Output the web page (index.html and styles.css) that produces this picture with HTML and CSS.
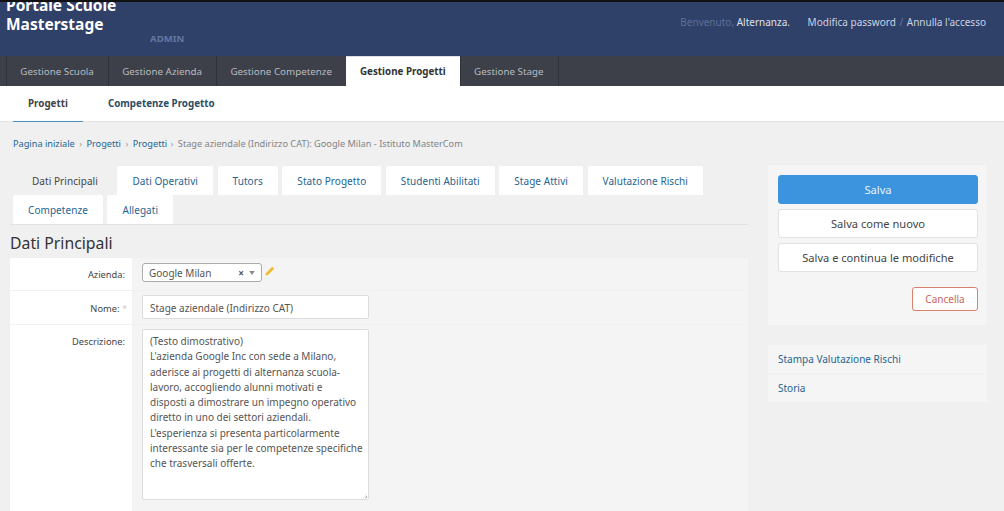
FILE: index.html
```html
<!DOCTYPE html>
<html lang="it">
<head>
  <meta charset="UTF-8">
  <meta name="viewport" content="width=device-width, initial-scale=1.0">
  <title>Portale Scuole Masterstage</title>
  <link rel="stylesheet" href="styles.css">
</head>
<body>
  <header class="top-bar">
    <div class="brand">
      <div class="brand-name">Portale Scuole<br>Masterstage</div>
      <div class="brand-role">ADMIN</div>
    </div>
    <div class="user-tools">
      <span class="welcome">Benvenuto,</span> <span class="user">Alternanza.</span>
      <a class="tool-first" href="#">Modifica password</a> <span class="slash">/</span> <a href="#">Annulla l'accesso</a>
    </div>
  </header>
  <nav class="main-nav">
    <a href="#">Gestione Scuola</a>
    <a href="#">Gestione Azienda</a>
    <a href="#">Gestione Competenze</a>
    <a class="active" href="#">Gestione Progetti</a>
    <a href="#">Gestione Stage</a>
  </nav>
  <nav class="sub-nav">
    <a class="active" href="#">Progetti</a>
    <a href="#">Competenze Progetto</a>
  </nav>
  <div class="breadcrumbs">
    <a href="#">Pagina iniziale</a> <i>›</i> <a href="#">Progetti</a> <i>›</i> <a href="#">Progetti</a> <i class="last">›</i> Stage aziendale (Indirizzo CAT): Google Milan - Istituto MasterCom
  </div>
  <main class="content">
    <section class="form-col">
      <div class="tabs">
        <a class="tab active" href="#">Dati Principali</a>
        <a class="tab" href="#">Dati Operativi</a>
        <a class="tab" href="#">Tutors</a>
        <a class="tab" href="#">Stato Progetto</a>
        <a class="tab" href="#">Studenti Abilitati</a>
        <a class="tab" href="#">Stage Attivi</a>
        <a class="tab" href="#">Valutazione Rischi</a>
        <a class="tab" href="#">Competenze</a>
        <a class="tab" href="#">Allegati</a>
      </div>
      <h2>Dati Principali</h2>
      <div class="form-row row-azienda">
        <label>Azienda:</label>
        <div class="field">
          <div class="select">
            <span>Google Milan</span>
            <b class="clear">×</b>
            <svg class="caret" width="6" height="4" viewBox="0 0 7 5"><path d="M0 0h7L3.5 5z" fill="#888"/></svg>
          </div>
          <svg class="pencil" width="10" height="10" viewBox="0 0 10 10"><path d="M7.2.8l2 2L3 9 .6 9.6 1 7z" fill="#eebb33"/></svg>
        </div>
      </div>
      <div class="form-row row-nome">
        <label>Nome: <em>*</em></label>
        <div class="field"><div class="input">Stage aziendale (Indirizzo CAT)</div></div>
      </div>
      <div class="form-row row-descr">
        <label>Descrizione:</label>
        <div class="field">
          <div class="input textarea">(Testo dimostrativo)<br>L'azienda Google Inc con sede a Milano, aderisce ai progetti di alternanza scuola-lavoro, accogliendo alunni motivati e<br>disposti a dimostrare un impegno operativo diretto in uno dei settori aziendali.<br>L'esperienza si presenta particolarmente interessante sia per le competenze specifiche che trasversali offerte.</div>
        </div>
      </div>
    </section>
    <aside class="side-col">
      <div class="actions">
        <button class="btn primary">Salva</button>
        <button class="btn">Salva come nuovo</button>
        <button class="btn">Salva e continua le modifiche</button>
        <div class="delete-row"><button class="btn-delete">Cancella</button></div>
      </div>
      <ul class="side-links">
        <li><a href="#">Stampa Valutazione Rischi</a></li>
        <li><a href="#">Storia</a></li>
      </ul>
    </aside>
  </main>
</body>
</html>
```

FILE: styles.css
```css
/* Global */
html, body { height: 511px; overflow: hidden; }
body {
  margin: 0;
  background: #f0f0f0;
  border-top: 2px solid #111;
  font-family: "Noto Sans", "Open Sans", sans-serif;
  font-size: 10px;
  color: #444;
}
a { color: #1f6591; text-decoration: none; }

/* Header */
.top-bar {
  height: 54px;
  overflow: hidden;
  display: flex;
  justify-content: space-between;
  background: #2f4069;
  padding: 0 18px 0 6px;
}
.brand-name {
  margin-top: -6px;
  font-size: 15.5px;
  line-height: 19px;
  font-weight: 700;
  color: #fff;
}
.brand-role {
  margin: -2px 0 0 144px;
  font-size: 9.6px;
  font-weight: 700;
  color: #64779f;
}
.user-tools { padding-top: 13px; font-size: 10px; color: #dfe5ef; }
.user-tools a { color: #cbd3e2; }
.welcome { color: #5d7099; }
.user { color: #dde2ea; }
.tool-first { margin-left: 15px; }
.slash { color: #64779f; margin: 0 1px; }

/* Main nav */
.main-nav {
  height: 30px;
  display: flex;
  padding-left: 6px;
  background: #3d4048;
  font-size: 9.8px;
}
.main-nav a {
  display: flex;
  align-items: center;
  padding: 0 14px 0 13.3px;
  border-left: 1px solid #2f3238;
  color: #b7bbc1;
}
.main-nav a:last-child { border-right: 1px solid #2f3238; }
.main-nav a.active {
  background: #fff;
  border-left: 0;
  border-top: 1px solid #dde;
  padding: 0 14px;
  color: #333;
  font-weight: 700;
}

/* Sub nav */
.sub-nav {
  height: 35px;
  display: flex;
  padding-left: 13px;
  background: #fff;
  border-bottom: 1px solid #e2e2e2;
  font-size: 9.8px;
}
.sub-nav a {
  display: flex;
  align-items: center;
  font-weight: 700;
  color: #2c4d66;
}
.sub-nav a.active {
  margin: 0 25px -1px 0;
  padding: 0 15px;
  border-bottom: 1px solid #4a90c0;
  color: #444;
}

/* Breadcrumbs */
.breadcrumbs {
  padding: 16px 13px 0;
  line-height: 12px;
  font-size: 9.2px;
  color: #808488;
}
.breadcrumbs i { font-style: normal; margin: 0 2px; color: #9a9a9a; }
.breadcrumbs i.last { margin: 0 2px 0 1px; }

/* Content */
.content {
  display: flex;
  align-items: flex-start;
  padding: 15px 17px 0 10px;
}
.form-col { width: 738px; padding-top: 1px; }
.side-col { width: 219px; margin-left: 20px; }

/* Tabs */
.tabs {
  display: flex;
  flex-wrap: wrap;
  align-content: flex-start;
  column-gap: 4.6px;
  height: 58px;
  padding-left: 3px;
  border-bottom: 1px solid #e2e2e2;
  letter-spacing: 0.06px;
}
.tab {
  display: flex;
  align-items: center;
  height: 29px;
  box-sizing: border-box;
  padding: 0 15px;
  background: #fff;
  border-radius: 2px 2px 0 0;
}
.tab.active { background: #f0f0f0; color: #444; }
.tab:nth-child(1) { margin-left: 4px; }

h2 {
  margin: 10px 0 6px;
  font-size: 15.8px;
  line-height: 17px;
  font-weight: 400;
  color: #333;
}

/* Form */
.form-row {
  display: flex;
  background: #f4f4f4;
  margin-bottom: 1px;
}
.form-row label {
  width: 115px;
  flex: none;
  padding: 0 7px 0 0;
  text-align: right;
  background: #fff;
  font-size: 9.3px;
  line-height: 12px;
  color: #444;
}
.field {
  display: flex;
  align-items: flex-start;
  padding-left: 10px;
}
.row-azienda { height: 32px; }
.row-azienda label { padding-top: 11px; }
.row-azienda .field { padding-top: 5px; }
.row-nome { height: 33px; }
.row-nome label { padding-top: 12px; padding-right: 5px; width: 117px; }
.row-nome em { font-style: normal; color: #ccc; }
.row-nome .field { padding-top: 4px; }
.row-descr { height: 186px; }
.row-descr label { padding-top: 11px; }
.row-descr .field { padding-top: 4px; }

.select {
  width: 120px;
  height: 19px;
  box-sizing: border-box;
  display: flex;
  align-items: center;
  padding: 0 6px;
  background: #fff;
  border: 1px solid #aaa;
  border-radius: 3px;
  color: #555;
}
.select span { flex: 1; }
.clear { font-size: 10px; color: #555; margin-right: 5px; }
.pencil { margin: 3px 0 0 3px; }
.input {
  width: 227px;
  height: 24px;
  box-sizing: border-box;
  padding: 1px 7px 0;
  display: flex;
  align-items: center;
  background: #fff;
  border: 1px solid #ddd;
  border-radius: 2px;
  color: #555;
}
.textarea {
  display: block;
  height: 171px;
  padding: 4px 4px 0 7px;
  line-height: 15.3px;
  position: relative;
}
.textarea::after {
  content: "";
  position: absolute;
  right: 1px;
  bottom: 1px;
  width: 5px;
  height: 5px;
  background: linear-gradient(135deg, transparent 50%, #bbb 50%, transparent 65%, transparent 75%, #bbb 75%);
}

/* Sidebar */
.actions {
  display: flex;
  flex-direction: column;
  gap: 5px;
  height: 160px;
  box-sizing: border-box;
  padding: 10px 9px 0 10px;
  background: #f5f5f5;
}
.btn {
  height: 29px;
  padding: 0;
  background: #fff;
  border: 1px solid #e2e2e2;
  border-radius: 3px;
  font: inherit;
  font-size: 11.1px;
  color: #444;
}
.btn.primary { background: #3c94de; border-color: #3c94de; color: #e8f2fb; }
.delete-row { display: flex; justify-content: flex-end; margin-top: 10px; }
.btn-delete {
  width: 66px;
  height: 24px;
  padding: 0;
  background: #fff;
  border: 1px solid #d9806f;
  border-radius: 3px;
  font: inherit;
  color: #c9665a;
}
.side-links {
  list-style: none;
  margin: 20px 0 0;
  padding: 0;
}
.side-links li {
  height: 28px;
  margin-bottom: 1px;
  display: flex;
  align-items: center;
  padding-left: 10px;
  background: #f5f5f5;
}
```
